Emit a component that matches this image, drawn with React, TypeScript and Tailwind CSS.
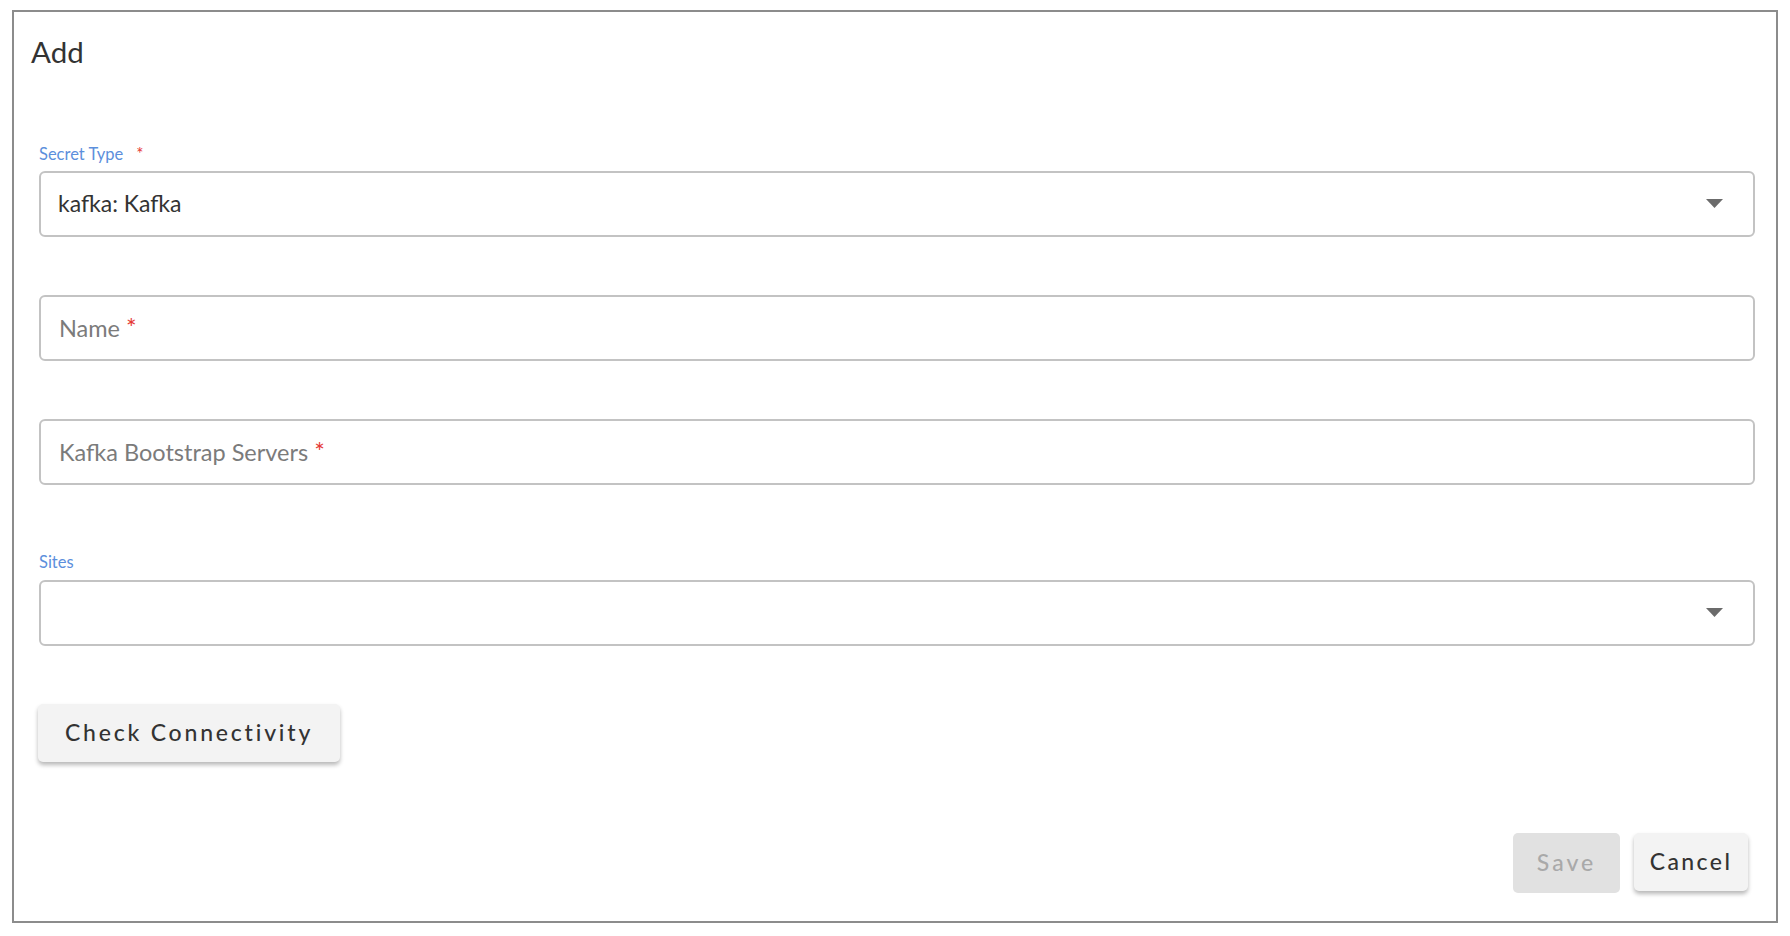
import React from 'react';

const font = { fontFamily: 'Lato, "Noto Sans", sans-serif' };

const Caret: React.FC = () => (
  <svg width="17" height="9" viewBox="0 0 17 9" className="shrink-0">
    <polygon points="0,0 17,0 8.5,9" fill="#6b6b6b" />
  </svg>
);

const FieldLabel: React.FC<{ text: string; required?: boolean }> = ({ text, required }) => (
  <div className="h-[16px] text-[16.5px] leading-none text-[#5c8fdc] mb-[10px]">
    {text}
    {required && <span className="ml-[13px] text-[17px] text-[#e53935]">*</span>}
  </div>
);

const SelectBox: React.FC<{ value?: string }> = ({ value }) => (
  <div className="h-[66px] w-full rounded-[6px] border-2 border-[#c3c3c3] flex items-center pl-[17px] pr-[30px]">
    <span className="flex-1 text-[23px] text-[#333333]">{value}</span>
    <Caret />
  </div>
);

const TextBox: React.FC<{ placeholder: string }> = ({ placeholder }) => (
  <div className="h-[66px] w-full rounded-[6px] border-2 border-[#c3c3c3] flex items-center pl-[18px]">
    <span className="text-[23.5px] text-[#7b7b7b]">
      {placeholder} <span className="text-[25px] text-[#e53935]">*</span>
    </span>
  </div>
);

export default function App() {
  return (
    <div className="w-full h-[936px] bg-white pt-[10px] pl-[12px]" style={font}>
      <div className="w-[1766px] h-[913px] border-2 border-[#8c8c8c] flex flex-col">
        <div className="pt-[25px] pl-[17px] text-[29.5px] leading-none text-[#333333]">Add</div>

        <div className="pl-[25px] pr-[21px] flex flex-col">
          <div className="mt-[78px]">
            <FieldLabel text="Secret Type" required />
            <SelectBox value="kafka: Kafka" />
          </div>

          <div className="mt-[58px]">
            <TextBox placeholder="Name" />
          </div>

          <div className="mt-[58px]">
            <TextBox placeholder="Kafka Bootstrap Servers" />
          </div>

          <div className="mt-[69px]">
            <FieldLabel text="Sites" />
            <SelectBox />
          </div>

          <div className="mt-[58px]">
            <button className="h-[58px] w-[302px] rounded-[5px] bg-[#f3f3f3] text-[23px] font-medium tracking-[2.8px] text-[#333333] shadow-[0_3px_4px_rgba(0,0,0,0.28)] -ml-px">
              Check Connectivity
            </button>
          </div>
        </div>

        <div className="mt-[71px] pr-[28px] flex justify-end gap-[14px]">
          <button className="h-[60px] w-[107px] rounded-[5px] bg-[#e1e1e1] text-[23px] font-medium tracking-[3px] text-[#a9a9a9]">
            Save
          </button>
          <button className="h-[58px] w-[114px] rounded-[5px] bg-[#f3f3f3] text-[23px] font-medium tracking-[2.4px] text-[#333333] shadow-[0_3px_4px_rgba(0,0,0,0.28)]">
            Cancel
          </button>
        </div>
      </div>
    </div>
  );
}
